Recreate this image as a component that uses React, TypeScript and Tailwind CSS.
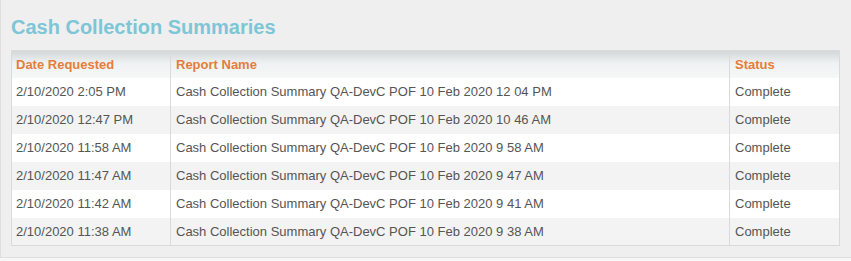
import React from 'react';

const rows = [
  { date: '2/10/2020 2:05 PM', name: 'Cash Collection Summary QA-DevC POF 10 Feb 2020 12 04 PM', status: 'Complete' },
  { date: '2/10/2020 12:47 PM', name: 'Cash Collection Summary QA-DevC POF 10 Feb 2020 10 46 AM', status: 'Complete' },
  { date: '2/10/2020 11:58 AM', name: 'Cash Collection Summary QA-DevC POF 10 Feb 2020 9 58 AM', status: 'Complete' },
  { date: '2/10/2020 11:47 AM', name: 'Cash Collection Summary QA-DevC POF 10 Feb 2020 9 47 AM', status: 'Complete' },
  { date: '2/10/2020 11:42 AM', name: 'Cash Collection Summary QA-DevC POF 10 Feb 2020 9 41 AM', status: 'Complete' },
  { date: '2/10/2020 11:38 AM', name: 'Cash Collection Summary QA-DevC POF 10 Feb 2020 9 38 AM', status: 'Complete' },
];

const App = () => {
  return (
    <div className="w-[851px] h-[261px] bg-[#f7f7f7] font-['Liberation_Sans',Arial,sans-serif]">
      <div className="h-[258px] bg-[#efefef] border-l border-b border-[#dfdfdf] pl-[10px] pr-[12px] pt-[16px]">
        <h1 className="text-[20px] leading-[23px] font-bold text-[#7cc6d7]">Cash Collection Summaries</h1>
        <table className="mt-[11px] w-[828px] border-collapse border border-[#dadada] text-[13px] table-fixed">
          <colgroup>
            <col className="w-[159px]" />
            <col className="w-[559px]" />
            <col className="w-[110px]" />
          </colgroup>
          <thead>
            <tr className="h-[27px] bg-linear-to-b from-[#d3d7d7] via-[#eff2f2] via-45% to-[#f6f8f8]">
              <th className="text-left font-bold text-[#e67c3b] pl-[4px] border-r border-[#dadada]">Date Requested</th>
              <th className="text-left font-bold text-[#e67c3b] pl-[5px] border-r border-[#dadada]">Report Name</th>
              <th className="text-left font-bold text-[#e67c3b] pl-[5px]">Status</th>
            </tr>
          </thead>
          <tbody>
            {rows.map((r, i) => (
              <tr key={i} className={`h-[28px] text-[#555555] ${i % 2 === 0 ? 'bg-white' : 'bg-[#f3f3f3]'}`}>
                <td className="pl-[4px] border-r border-[#dadada] whitespace-nowrap">{r.date}</td>
                <td className="pl-[5px] border-r border-[#dadada] whitespace-nowrap">{r.name}</td>
                <td className="pl-[5px] whitespace-nowrap">{r.status}</td>
              </tr>
            ))}
          </tbody>
        </table>
      </div>
    </div>
  );
};

export default App;
